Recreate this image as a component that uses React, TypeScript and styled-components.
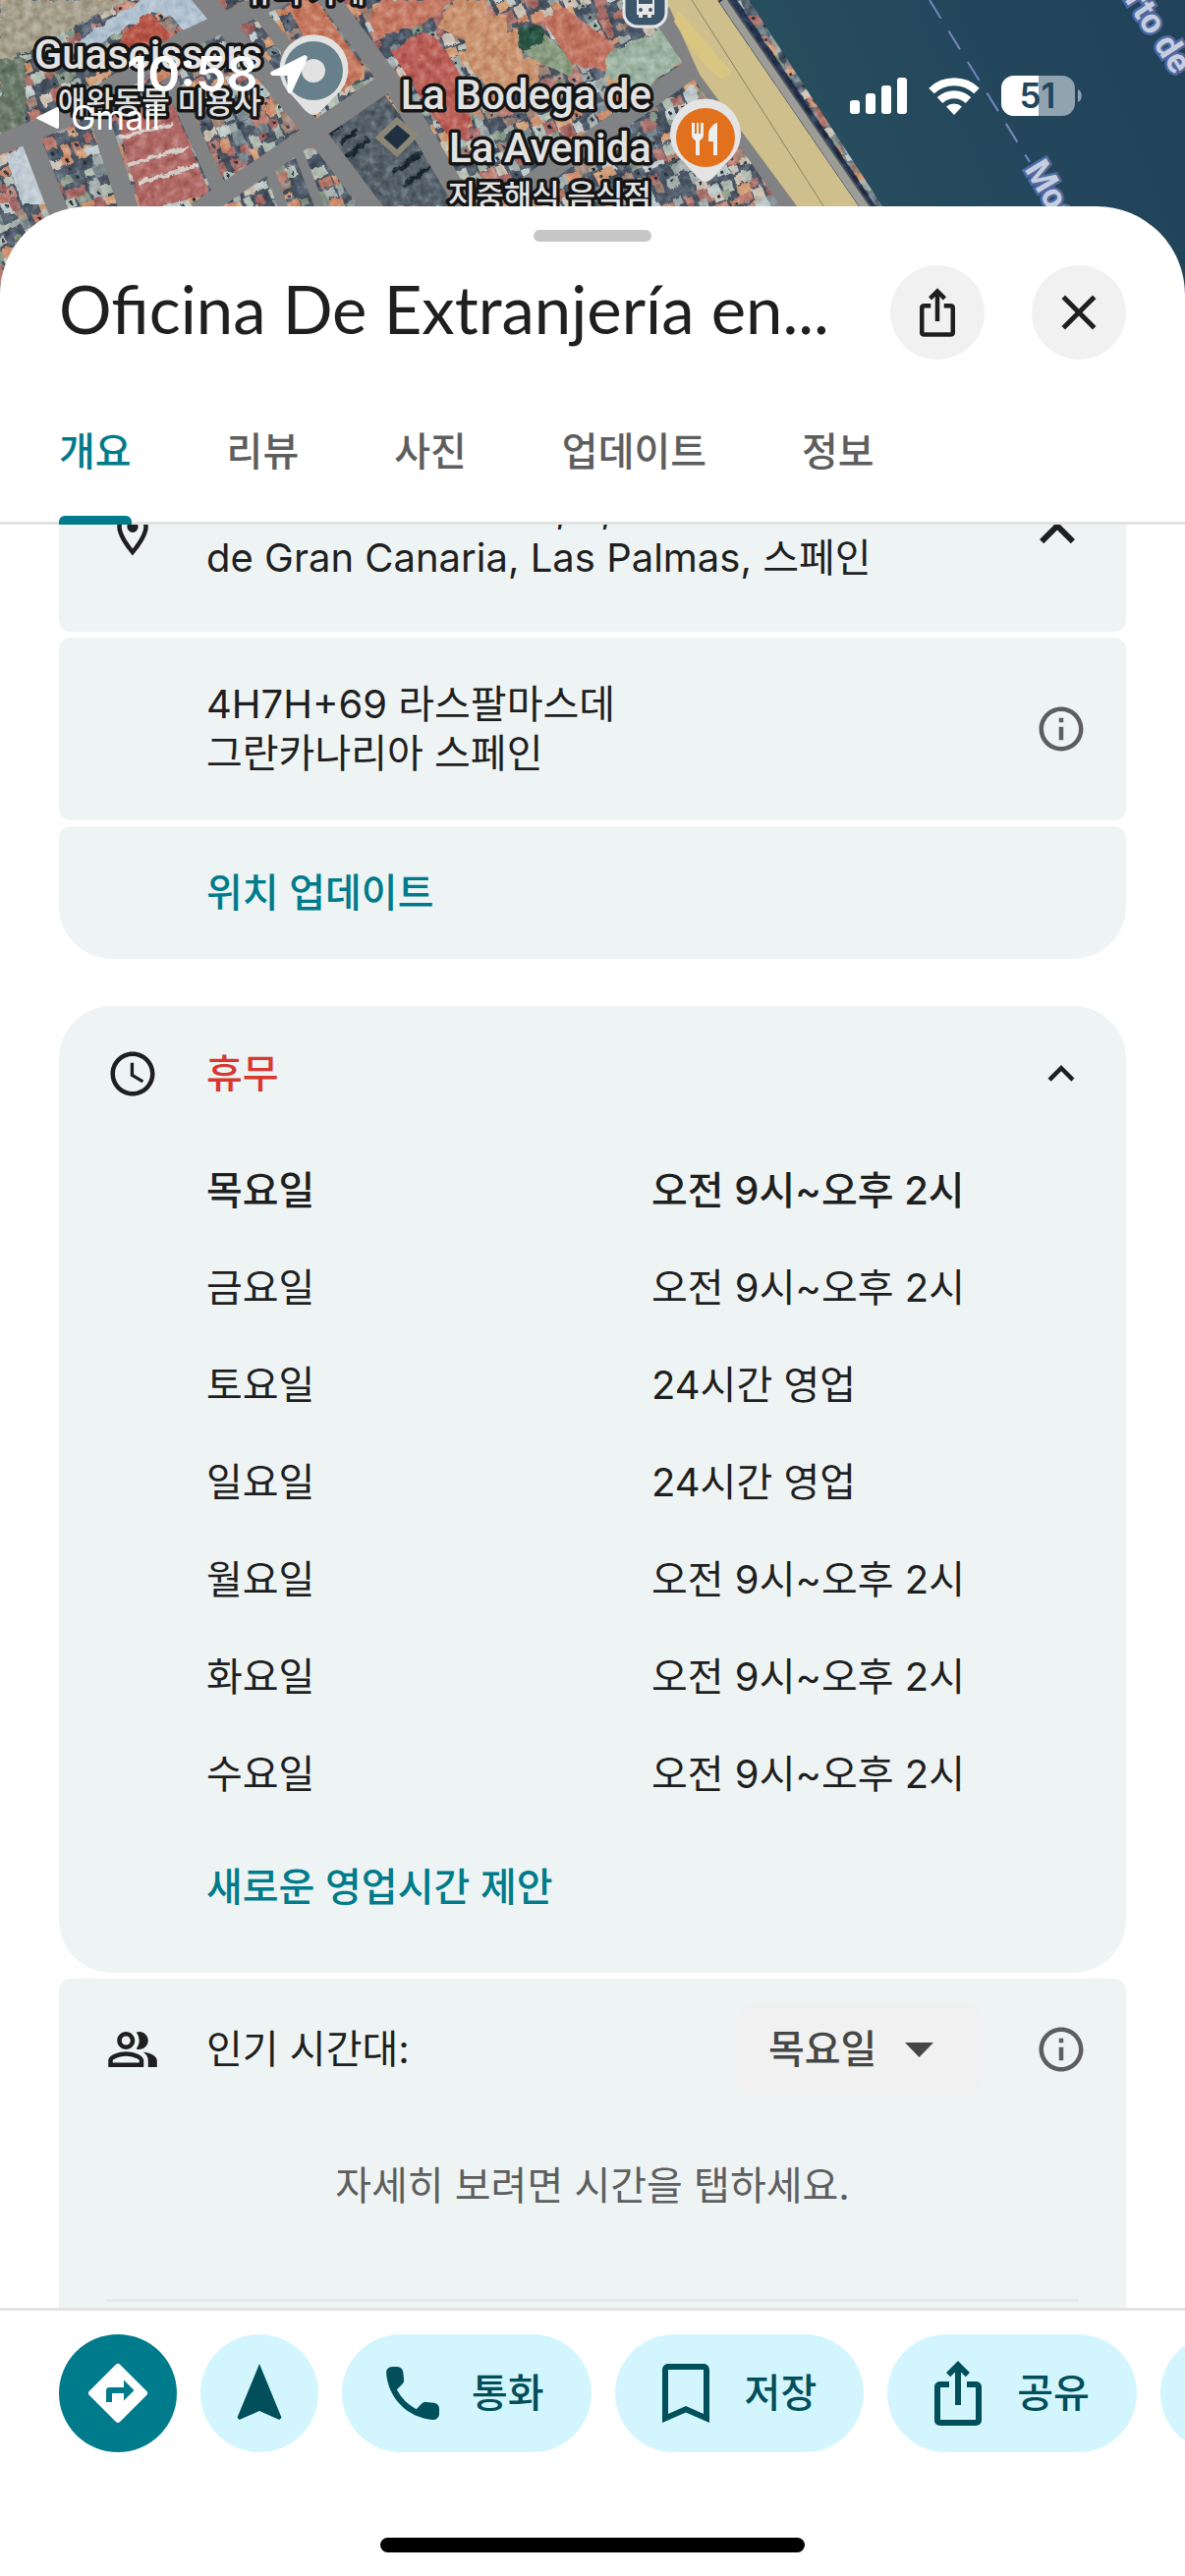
import React, { useLayoutEffect, useRef, useState } from "react";
import styled, { createGlobalStyle, css } from "styled-components";

const color = {
  ink: "#1f1f1f",
  muted: "#5e5e5e",
  teal: "#007b8b",
  deepTeal: "#004f5a",
  aqua: "#d3f6fe",
  card: "#eef4f4",
  chip: "#f1f1f1",
  line: "#e2e2e2",
  red: "#d93831",
};

const GlobalStyle = createGlobalStyle`
  *, *::before, *::after { box-sizing: border-box; }
  body { margin: 0; background: #fff; }
  button, select { font: inherit; color: inherit; }
  button { border: 0; padding: 0; background: none; cursor: pointer; }
`;

/* ---------- page frame ---------- */

const Screen = styled.div`
  position: relative;
  display: flex;
  flex-direction: column;
  height: 100vh;
  overflow: hidden;
  color: ${color.ink};
  font-family: Inter, "Noto Sans CJK KR", sans-serif;
  font-size: 40px;
  line-height: 50px;
`;

const MapCanvas = styled.svg`
  position: absolute;
  top: 0;
  left: 0;
  width: 100%;
  height: 340px;
`;

const StatusBar = styled.header`
  position: relative;
  display: flex;
  flex: none;
  justify-content: space-between;
  height: 210px;
  padding: 45px 104px 0 37px;
  color: #fff;
`;

const ClockBlock = styled.div`
  display: flex;
  flex-direction: column;
`;

const Clock = styled.div`
  display: flex;
  align-items: center;
  gap: 12px;
  height: 60px;
  padding-left: 92px;
  font-size: 50px;
  font-weight: 600;
`;

const BackLink = styled.a`
  display: flex;
  align-items: center;
  gap: 12px;
  height: 30px;
  color: #fff;
  font-size: 34px;
  line-height: 30px;
  text-decoration: none;
`;

const Indicators = styled.div`
  display: flex;
  align-items: center;
  gap: 22px;
  height: 106px;
`;

const Sheet = styled.main`
  position: relative;
  display: flex;
  flex: 1;
  flex-direction: column;
  min-height: 0;
  overflow: hidden;
  background: #fff;
  border-radius: 90px 90px 0 0;
`;

const Grabber = styled.div`
  flex: none;
  width: 120px;
  height: 12px;
  margin: 24px auto;
  border-radius: 6px;
  background: #c6c6c6;
`;

const TitleRow = styled.div`
  display: flex;
  flex: none;
  align-items: center;
  gap: 48px;
  padding: 0 60px;
`;

const Title = styled.h1`
  flex: 1;
  min-width: 0;
  margin: 0;
  padding-bottom: 8px;
  overflow: hidden;
  font-family: Lato, "Noto Sans", sans-serif;
  font-size: 67px;
  font-weight: 400;
  line-height: 88px;
  white-space: nowrap;
`;

const RoundButton = styled.button`
  display: grid;
  place-items: center;
  flex: none;
  width: 96px;
  height: 96px;
  border-radius: 50%;
  background: ${color.chip};
`;

const TabList = styled.div`
  display: flex;
  flex: none;
  gap: 97px;
  padding: 0 60px;
  border-bottom: 3px solid ${color.line};
`;

const Tab = styled.button<{ $active: boolean }>`
  position: relative;
  height: 168px;
  margin-bottom: -3px;
  padding-bottom: 20px;
  padding-top: 40px;
  color: ${(p) => (p.$active ? color.teal : color.muted)};
  font-weight: 500;
  ${(p) =>
    p.$active &&
    css`
      &::after {
        content: "";
        position: absolute;
        right: 0;
        bottom: 0;
        left: 0;
        height: 9px;
        border-radius: 6px 6px 0 0;
        background: ${color.teal};
      }
    `}
`;

const ScrollArea = styled.div`
  flex: 1;
  min-height: 0;
  overflow-y: auto;
  scrollbar-width: none;
  padding: 0 60px;
`;

/* ---------- cards ---------- */

const Group = styled.section`
  display: flex;
  flex-direction: column;
  gap: 6px;
  & + & {
    margin-top: 48px;
  }
`;

const Card = styled.div<{ $top?: boolean; $bottom?: boolean }>`
  overflow: hidden;
  background: ${color.card};
  border-radius: ${(p) => (p.$top ? "54px 54px" : "12px 12px")}
    ${(p) => (p.$bottom ? "54px 54px" : "12px 12px")};
`;

const CardRow = styled.div<{ $height: number }>`
  display: flex;
  align-items: center;
  gap: 48px;
  min-height: ${(p) => p.$height}px;
  padding: 0 34px 0 48px;
`;

const IconSlot = styled.span`
  display: grid;
  place-items: center;
  flex: none;
  width: 54px;
  height: 54px;
`;

const RowText = styled.div`
  flex: 1;
  min-width: 0;
  white-space: nowrap;
`;

const Status = styled(RowText)`
  color: ${color.red};
  font-weight: 500;
`;

const EndButton = styled.button<{ $muted?: boolean }>`
  display: grid;
  place-items: center;
  flex: none;
  min-width: 64px;
  color: ${(p) => (p.$muted ? color.muted : color.ink)};
`;

const TextLink = styled.a`
  color: ${color.teal};
  font-weight: 500;
  text-decoration: none;
`;

const HoursTable = styled.table`
  width: 100%;
  border-collapse: collapse;
  text-align: left;
`;

const DayRow = styled.tr<{ $today?: boolean }>`
  height: 99px;
  font-weight: ${(p) => (p.$today ? 500 : 400)};
  th,
  td {
    padding: 0;
    font-weight: inherit;
  }
  th {
    width: 603px;
    padding-left: 150px;
  }
`;

const HoursFooter = styled.div`
  padding: 41px 150px 62px;
`;

const DayPicker = styled.div`
  display: grid;
  flex: none;
  width: 250px;
  height: 96px;
  align-items: center;
  color: #444746;
  font-weight: 500;
  > * {
    grid-area: 1 / 1;
  }
  svg {
    justify-self: end;
    margin-right: 50px;
    pointer-events: none;
  }
`;

const DaySelect = styled.select`
  width: 100%;
  height: 100%;
  padding: 0 32px;
  border: 0;
  border-radius: 18px;
  background: ${color.chip};
  appearance: none;
`;

const Hint = styled.p`
  margin: 42px 0 0;
  color: ${color.muted};
  text-align: center;
`;

const Divider = styled.hr`
  height: 3px;
  margin: 90px 48px 120px;
  border: 0;
  background: #e6eaea;
`;

/* ---------- bottom bar ---------- */

const Footer = styled.footer`
  flex: none;
  padding: 24px 0;
  border-top: 3px solid ${color.line};
  background: #fff;
`;

const Actions = styled.div`
  display: flex;
  gap: 24px;
  padding-left: 60px;
  overflow: hidden;
`;

const Action = styled.button<{ $primary?: boolean; $round?: boolean }>`
  display: flex;
  flex: none;
  align-items: center;
  justify-content: center;
  gap: 24px;
  height: 120px;
  padding: ${(p) => (p.$round ? "0 24px" : "0 48px 0 36px")};
  border-radius: 60px;
  background: ${(p) => (p.$primary ? color.teal : color.aqua)};
  color: ${(p) => (p.$primary ? "#fff" : color.deepTeal)};
  font-weight: 500;
`;

const HomeIndicator = styled.div`
  width: 432px;
  height: 15px;
  margin: 87px auto 0;
  border-radius: 8px;
  background: #000;
`;

/* ---------- icons ---------- */

const paths = {
  share:
    "M12 1l4 4-1.4 1.4L13 4.8V16h-2V4.8L9.4 6.4 8 5zM6 8h3v2H6v11h12V10h-3V8h3c1.1 0 2 .7 2 1.8V21.2c0 1.1-.9 1.8-2 1.8H6c-1.1 0-2-.7-2-1.8V9.8c0-1.1.9-1.8 2-1.8z",
  close:
    "M19 6.41L17.59 5 12 10.59 6.41 5 5 6.41 10.59 12 5 17.59 6.41 19 12 13.41 17.59 19 19 17.59 13.41 12z",
  pin: "M12 2C8.13 2 5 5.13 5 9c0 5.25 7 13 7 13s7-7.75 7-13c0-3.87-3.13-7-7-7zM7 9c0-2.76 2.24-5 5-5s5 2.24 5 5c0 2.88-2.88 7.19-5 9.88C9.92 16.21 7 11.85 7 9zM12 6.5a2.5 2.5 0 100 5 2.5 2.5 0 100-5z",
  clock:
    "M11.99 2C6.47 2 2 6.48 2 12s4.47 10 9.99 10C17.52 22 22 17.52 22 12S17.52 2 11.99 2zM12 20c-4.42 0-8-3.58-8-8s3.58-8 8-8 8 3.58 8 8-3.58 8-8 8zm.5-13H11v6l5.25 3.15.75-1.23-4.5-2.67z",
  info: "M11 7h2v2h-2zm0 4h2v6h-2zm1-9C6.48 2 2 6.48 2 12s4.48 10 10 10 10-4.48 10-10S17.52 2 12 2zm0 18c-4.41 0-8-3.59-8-8s3.59-8 8-8 8 3.59 8 8-3.59 8-8 8z",
  up: "M12 8l-6 6 1.41 1.41L12 10.83l4.59 4.58L18 14z",
  people:
    "M9 12c2.21 0 4-1.79 4-4s-1.79-4-4-4-4 1.79-4 4 1.79 4 4 4zm0-6c1.1 0 2 .9 2 2s-.9 2-2 2-2-.9-2-2 .9-2 2-2zM9 13c-2.67 0-8 1.34-8 4v3h16v-3c0-2.66-5.33-4-8-4zm6 5H3v-.99C3.2 16.29 6.3 15 9 15s5.8 1.29 6 2zM15 12c2.21 0 4-1.79 4-4s-1.79-4-4-4c-.47 0-.91.1-1.33.24a5.98 5.98 0 010 7.52c.42.14.86.24 1.33.24zM16.67 13.13C18.04 14.06 19 15.32 19 17v3h4v-3c0-2.18-3.57-3.47-6.33-3.87z",
  directions:
    "M21.71 11.29l-9-9a.996.996 0 00-1.41 0l-9 9a.996.996 0 000 1.41l9 9c.39.39 1.02.39 1.41 0l9-9a.996.996 0 000-1.41zM14 14.5V12h-4v3H8v-4c0-.55.45-1 1-1h5V7.5l3.5 3.5z",
  navigate: "M12 2L4.5 20.29l.71.71L12 18l6.79 3 .71-.71z",
  call: "M19.23 15.26l-2.54-.29a1.99 1.99 0 00-1.64.57l-1.84 1.84a15.045 15.045 0 01-6.59-6.59l1.85-1.85c.43-.43.64-1.03.57-1.64l-.29-2.52A2.001 2.001 0 006.77 3.01H5.04C3.91 3.01 2.97 3.95 3.04 5.08c.53 8.54 7.36 15.36 15.89 15.89 1.13.07 2.07-.87 2.07-2v-1.73c.01-1.01-.75-1.86-1.77-1.98z",
  save: "M6 2h12c1.1 0 2 .9 2 2v18l-8-3.5L4 22V4c0-1.1.9-2 2-2zm0 2v15l6-2.65L18 19V4z",
};

function Icon({ name, size }: { name: keyof typeof paths; size: number }) {
  return (
    <svg width={size} height={size} viewBox="0 0 24 24" fill="currentColor" fillRule="evenodd" aria-hidden="true">
      <path d={paths[name]} />
    </svg>
  );
}

function StatusIcons() {
  return (
    <Indicators>
      <svg width="58" height="38" viewBox="0 0 58 38" fill="#fff" aria-label="신호">
        <rect x="0" y="23" width="10" height="14" rx="3" />
        <rect x="16" y="16" width="10" height="21" rx="3" />
        <rect x="32" y="8" width="10" height="29" rx="3" />
        <rect x="48" y="0" width="10" height="37" rx="3" />
      </svg>
      <svg width="52" height="38" viewBox="0 0 52 38" fill="none" stroke="#fff" strokeWidth="8" aria-label="Wi-Fi">
        <path d="M3 13.5a33 33 0 0146 0" />
        <path d="M11.5 23a21 21 0 0129 0" />
        <path d="M26 38l-8-8.5a12 12 0 0116 0z" fill="#fff" stroke="none" />
      </svg>
      <svg width="83" height="42" viewBox="0 0 83 42" aria-label="배터리">
        <defs>
          <clipPath id="cell">
            <rect width="75" height="41" rx="13" />
          </clipPath>
        </defs>
        <g clipPath="url(#cell)">
          <rect width="75" height="41" fill="#91a3af" />
          <rect width="38" height="41" fill="#fff" />
        </g>
        <path d="M78 14c5 2 5 11 0 13z" fill="#91a3af" />
        <text x="37" y="33" textAnchor="middle" fontFamily="Inter, sans-serif" fontSize="35" fontWeight="600" fill="#22455d">
          51
        </text>
      </svg>
    </Indicators>
  );
}

/* ---------- satellite map ---------- */

const roofs = ["#bd8274", "#cf9070", "#ad736e", "#a3adab", "#c3cdcd", "#7d8c92", "#a08579", "#d3a17c", "#8b9b8a", "#5c6674", "#cdc3b6", "#a56a68", "#b4c0b6", "#4c5766"];

function makeRoofs() {
  let seed = 11;
  const next = () => {
    seed = (seed * 16807) % 2147483647;
    return seed / 2147483647;
  };
  const list: { x: number; y: number; w: number; h: number; fill: string; yard: boolean }[] = [];
  for (let y = -480; y < 500; y += 11) {
    for (let x = -160; x < 900; x += 13) {
      list.push({
        x: x + next() * 5,
        y: y + next() * 4,
        w: 7 + next() * 10,
        h: 6 + next() * 9,
        fill: roofs[Math.floor(next() * roofs.length)],
        yard: next() > 0.7,
      });
    }
  }
  return list;
}

const roofList = makeRoofs();

function SatelliteMap() {
  const label = {
    fill: "#e2e2e2",
    stroke: "#151515",
    strokeWidth: 7,
    strokeLinejoin: "round" as const,
    paintOrder: "stroke",
  };
  return (
    <MapCanvas viewBox="0 0 1206 340" preserveAspectRatio="xMinYMin slice" aria-label="지도">
      <defs>
        <filter id="grain" x="0" y="0" width="100%" height="100%">
          <feTurbulence type="fractalNoise" baseFrequency="0.12" numOctaves="4" seed="4" result="n" />
          <feDisplacementMap in="SourceGraphic" in2="n" scale="6" result="d" />
          <feColorMatrix in="n" type="matrix" values="1.5 0 0 0 -.3  1.5 0 0 0 -.3  1.5 0 0 0 -.3  0 0 0 0 .5" result="g" />
          <feBlend in="g" in2="d" mode="soft-light" />
        </filter>
        <linearGradient id="sea" x1="0" x2="1" y1="0.3" y2="0">
          <stop offset="0" stopColor="#28505e" />
          <stop offset="0.4" stopColor="#24485c" />
          <stop offset="1" stopColor="#20425a" />
        </linearGradient>
      </defs>
      <rect width="1206" height="340" fill="#22455b" />
      <g filter="url(#grain)">
        <path d="M0 0H740L905 240V340H0z" fill="#4b5665" />
        <g transform="rotate(-22)">
          {roofList.map((r, i) => (
            <g key={i}>
              <rect x={r.x} y={r.y} width={r.w} height={r.h} fill={r.fill} />
              {r.yard && <rect x={r.x + 4} y={r.y + 3} width="3" height="3" fill="#2c3440" />}
            </g>
          ))}
        </g>
        <path d="M0 0h130L0 66z" fill="#a9a38f" />
        <path d="M0 60h26v80H0z" fill="#6a7a69" />
        <path d="M76 44L150 -4 212 -4 222 34 196 42 176 18 154 12 96 48z" fill="#b4c4d2" />
        <path d="M122 38l30-26 22 24-8 24-34 14z" fill="#b9584c" />
        <path d="M292 6l26-12 54 78-22 22-20-18z" fill="#c77c62" />
        <path d="M398 52l32-20 16 8 34 54-4 50-20-6-22-30z" fill="#bd635c" />
        <path d="M374 20l14-20h72l-24 22-52 16z" fill="#c77b66" />
        <path d="M446 28l14-28h36v16h20v18h16v26h16v22l-10 12-40-4-20-20-6-30z" fill="#cc9672" />
        <path d="M530 36l16-10 42 40-8 12-30-14-16-10z" fill="#8fa185" />
        <path d="M528 34c4-10 20-12 26-4l-2 14-22 8z" fill="#2c5544" />
        <path d="M552 20l20-14 54 40-10 26-34-6z" fill="#c27663" />
        <path d="M618 56l56-28 20 34-42 30-36-14z" fill="#9fb5a4" />
        <path d="M322 134l66-42 90 118h-100z" fill="#56626c" />
        <path d="M336 136l12-9M346 146l18-14M352 160l24-18M400 176l34-24M410 190l36-26" stroke="#1f2a36" strokeWidth="5" />
        <path d="M118 118l56-16 40 96-70 16z" fill="#b26c67" />
        <path d="M130 168l62-18M140 186l62-18M122 140l54-14" stroke="#d5cfca" strokeWidth="4" />
        <path d="M6 158l24-12 24 62H22z" fill="#c3ced6" />
        <path d="M716 0H750L912 240H880z" fill="#263650" />
      </g>
      <path d="M762 0H1206V340H960L898 210z" fill="url(#sea)" />
      <g fill="none" stroke="#808283" strokeWidth="20">
        <path d="M-10 151L66 120 186 42 290 -6" />
        <path d="M203 -6L320 134 388 224" />
        <path d="M262 10L318 84" strokeWidth="14" />
        <path d="M331 -6L404 92 482 224" />
        <path d="M200 216L320 134 402 78" />
        <path d="M30 138L62 222" />
        <path d="M98 110L134 222" />
        <path d="M172 78L228 204" strokeWidth="15" />
        <path d="M272 166L292 222M302 150L330 222" strokeWidth="10" />
        <path d="M536 190L712 64" />
        <path d="M674 12L820 226" strokeWidth="24" />
      </g>
      <path d="M386 140l18-17 18 15-18 18z" fill="#1f3140" stroke="#8c8676" strokeWidth="6" />
      <path d="M678 0H730L882 222H820L712 76z" fill="#cfbf8c" />
      <path d="M686 22q30 48 48 58 16-6 4-14L690 10z" fill="#d9c781" />
      <path d="M704 0L846 222" stroke="#8a815f" strokeWidth="1" />
      <path d="M736 0L888 222" stroke="#9d9d98" strokeWidth="9" />
      <path d="M741 0L894 222" stroke="#4e545b" strokeWidth="2" />
      <path d="M946 0L1048 165" fill="none" stroke="#7486c0" strokeWidth="2" strokeDasharray="22 15" />
      <g fontFamily="Roboto, sans-serif" fontWeight="700" fontSize="35" fill="#c5cee0" stroke="#51699f" strokeWidth="5" paintOrder="stroke">
        <text transform="translate(1042 172) rotate(59)">Mogán</text>
        <text transform="translate(1134 -16) rotate(57)">erto de</text>
      </g>

      <g fontFamily='Roboto, "Noto Sans CJK KR", sans-serif' fontWeight="500" {...label}>
        <g textAnchor="end">
          <text x="267" y="70" fontSize="42">Guascissors</text>
          <text x="266" y="115" fontSize="31">애완동물 미용사</text>
          <text x="663" y="111" fontSize="42">La Bodega de</text>
          <text x="663" y="165" fontSize="42">La Avenida</text>
          <text x="663" y="210" fontSize="31">지중해식 음식점</text>
        </g>
        <text x="250" y="2" fontSize="31">뷰티 가게</text>
      </g>
      <path d="M319 117c-7 0-14-12-22-20a35 35 0 1145 0c-9 8-16 20-23 20z" fill="#e2e2e2" />
      <circle cx="319" cy="72" r="30" fill="#68808b" />
      <circle cx="319" cy="72" r="12" fill="#e2e2e2" />
      <path d="M718 185c-7 0-14-12-22-20a36 36 0 1144 0c-8 8-15 20-22 20z" fill="#e4e4e4" />
      <circle cx="718" cy="140" r="30" fill="#e2711d" />
      <path d="M704 125v12q0 4 4 6v15h4v-15q4-2 4-6v-12h-3v11h-2v-11h-2v11h-2v-11zM729 125q-8 4-8 13v6h5v14h4v-33z" fill="#eee" />
      <rect x="635" y="-20" width="43" height="47" rx="14" fill="#3c566c" stroke="#e6e6e6" strokeWidth="3" />
      <path d="M648 -6h18v21h-3v3h-4v-3h-5v3h-4v-3h-2z" fill="#e6e6e6" />
      <path d="M650 -2h14v6h-14z" fill="#3c566c" />
      <circle cx="652" cy="10" r="2" fill="#3c566c" />
      <circle cx="662" cy="10" r="2" fill="#3c566c" />
    </MapCanvas>
  );
}

/* ---------- data ---------- */

const tabs = ["개요", "리뷰", "사진", "업데이트", "정보"];
const office = "오전 9시~오후 2시";
const allDay = "24시간 영업";
const week = [
  ["목요일", office],
  ["금요일", office],
  ["토요일", allDay],
  ["일요일", allDay],
  ["월요일", office],
  ["화요일", office],
  ["수요일", office],
];

/* The list opens scrolled so that the address sits partly under the tabs. */
const INITIAL_SCROLL = 91;

export default function App() {
  const [tab, setTab] = useState(tabs[0]);
  const scroller = useRef<HTMLDivElement>(null);

  useLayoutEffect(() => {
    if (scroller.current) scroller.current.scrollTop = INITIAL_SCROLL;
  }, []);

  return (
    <Screen>
      <GlobalStyle />
      <SatelliteMap />
      <StatusBar>
        <ClockBlock>
          <Clock>
            10:58
            <svg width="38" height="39" viewBox="0 0 38 39" fill="#fff" aria-hidden="true">
              <path d="M34 .5L2 16.5c-3 1.5-2 4.5 1 4.5h14.5v15c0 3.5 3.5 4 5 1L37.5 4c1-2.5-1-4.500-3.500-3.500z" />
            </svg>
          </Clock>
          <BackLink href="#gmail">
            <svg width="23" height="22" viewBox="0 0 23 22" fill="#fff" aria-hidden="true">
              <path d="M21 0q2 0 2 2v18q0 2-2 2L1 12q-2-1 0-2z" />
            </svg>
            Gmail
          </BackLink>
        </ClockBlock>
        <StatusIcons />
      </StatusBar>

      <Sheet>
        <Grabber />
        <TitleRow>
          <Title>Oficina De Extranjería en...</Title>
          <RoundButton aria-label="공유">
            <Icon name="share" size={54} />
          </RoundButton>
          <RoundButton aria-label="닫기">
            <Icon name="close" size={60} />
          </RoundButton>
        </TitleRow>
        <TabList role="tablist">
          {tabs.map((name) => (
            <Tab key={name} role="tab" aria-selected={name === tab} $active={name === tab} onClick={() => setTab(name)}>
              {name}
            </Tab>
          ))}
        </TabList>

        <ScrollArea ref={scroller}>
          <Group>
            <Card>
              <CardRow $height={200}>
                <IconSlot>
                  <Icon name="pin" size={54} />
                </IconSlot>
                <RowText>
                  Pl. de la Concordia, 5, 35003 Las Palmas
                  <br />
                  de Gran Canaria, Las Palmas, 스페인
                </RowText>
                <EndButton aria-label="주소 접기">
                  <Icon name="up" size={72} />
                </EndButton>
              </CardRow>
            </Card>
            <Card>
              <CardRow $height={186}>
                <IconSlot />
                <RowText>
                  4H7H+69 라스팔마스데
                  <br />
                  그란카나리아 스페인
                </RowText>
                <EndButton $muted aria-label="플러스 코드 정보">
                  <Icon name="info" size={54} />
                </EndButton>
              </CardRow>
            </Card>
            <Card $bottom>
              <CardRow $height={135}>
                <IconSlot />
                <TextLink href="#location">위치 업데이트</TextLink>
              </CardRow>
            </Card>
          </Group>

          <Group>
            <Card $top $bottom>
              <CardRow $height={138}>
                <IconSlot>
                  <Icon name="clock" size={54} />
                </IconSlot>
                <Status>휴무</Status>
                <EndButton aria-label="영업시간 접기">
                  <Icon name="up" size={54} />
                </EndButton>
              </CardRow>
              <HoursTable>
                <tbody>
                  {week.map(([day, hours], i) => (
                    <DayRow key={day} $today={i === 0}>
                      <th scope="row">{day}</th>
                      <td>{hours}</td>
                    </DayRow>
                  ))}
                </tbody>
              </HoursTable>
              <HoursFooter>
                <TextLink href="#hours">새로운 영업시간 제안</TextLink>
              </HoursFooter>
            </Card>
            <Card>
              <CardRow $height={144}>
                <IconSlot>
                  <Icon name="people" size={54} />
                </IconSlot>
                <RowText as="label" htmlFor="popular-day">
                  인기 시간대:
                </RowText>
                <DayPicker>
                  <DaySelect id="popular-day" defaultValue="목요일">
                    {week.map(([day]) => (
                      <option key={day}>{day}</option>
                    ))}
                  </DaySelect>
                  <svg width="29" height="15" viewBox="0 0 29 15" fill="currentColor" aria-hidden="true">
                    <path d="M0 0h29L14.5 15z" />
                  </svg>
                </DayPicker>
                <EndButton $muted aria-label="인기 시간대 정보">
                  <Icon name="info" size={54} />
                </EndButton>
              </CardRow>
              <Hint>자세히 보려면 시간을 탭하세요.</Hint>
              <Divider />
            </Card>
          </Group>
        </ScrollArea>

        <Footer>
          <Actions>
            <Action $primary $round aria-label="경로">
              <Icon name="directions" size={72} />
            </Action>
            <Action $round aria-label="시작">
              <Icon name="navigate" size={72} />
            </Action>
            <Action>
              <Icon name="call" size={72} />
              통화
            </Action>
            <Action>
              <Icon name="save" size={72} />
              저장
            </Action>
            <Action>
              <Icon name="share" size={72} />
              공유
            </Action>
            <Action aria-label="게시">
              <Icon name="people" size={72} />
              게시
            </Action>
          </Actions>
          <HomeIndicator />
        </Footer>
      </Sheet>
    </Screen>
  );
}
